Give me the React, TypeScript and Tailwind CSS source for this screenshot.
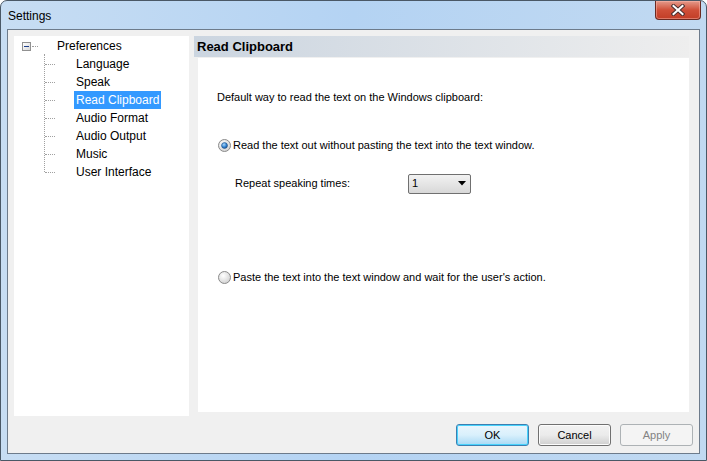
import React from "react";

const FONT = { fontFamily: '"Liberation Sans", Arial, sans-serif' };

function Radio({ checked }: { checked?: boolean }) {
  return (
    <svg width="13" height="13" viewBox="0 0 13 13" className="shrink-0">
      <defs>
        <radialGradient id={checked ? "rg1" : "rg2"} cx="0.4" cy="0.35" r="0.7">
          <stop offset="0" stopColor="#ffffff" />
          <stop offset="1" stopColor="#d0d0d0" />
        </radialGradient>
        <radialGradient id="dot" cx="0.4" cy="0.35" r="0.7">
          <stop offset="0" stopColor="#a9d8fa" />
          <stop offset="0.6" stopColor="#2f7fcf" />
          <stop offset="1" stopColor="#1b4f8a" />
        </radialGradient>
      </defs>
      <circle cx="6.5" cy="6.5" r="6" fill={`url(#${checked ? "rg1" : "rg2"})`} stroke="#8a8a8a" strokeWidth="1" />
      {checked && <circle cx="6.5" cy="6.5" r="3" fill="url(#dot)" stroke="#1d4b7e" strokeWidth="0.5" />}
    </svg>
  );
}

function Btn({ label, variant }: { label: string; variant?: "default" | "disabled" }) {
  const base = "w-[73px] h-[22px] rounded-[3px] flex items-center justify-center text-[11px]";
  if (variant === "default")
    return (
      <div className={`${base} border border-[#3c7fb1] bg-gradient-to-b from-[#eaf6fd] via-[#d9f0fc] to-[#a7d9f5] text-black shadow-[inset_0_0_0_1px_#48d2fc]`}>
        {label}
      </div>
    );
  if (variant === "disabled")
    return <div className={`${base} border border-[#adb2b5] bg-[#f4f4f4] text-[#838383]`}>{label}</div>;
  return (
    <div className={`${base} border border-[#707070] bg-gradient-to-b from-[#f2f2f2] via-[#ebebeb] to-[#cfcfcf] text-black shadow-[inset_0_0_0_1px_#fcfcfc]`}>
      {label}
    </div>
  );
}

const items = ["Language", "Speak", "Read Clipboard", "Audio Format", "Audio Output", "Music", "User Interface"];

export default function App() {
  return (
    <div
      className="w-[707px] h-[461px] flex flex-col border border-[#4a5866] rounded-t-[7px] overflow-hidden bg-gradient-to-r from-[#c7ddf3] via-[#b4d3f3] to-[#c1d9f1] text-black"
      style={FONT}
    >
      {/* title bar */}
      <div className="h-[28px] flex items-start shrink-0 relative">
        <span className="ml-[7px] mt-[6px] text-[12px] text-black">Settings</span>
        <div className="absolute right-[5px] top-0 w-[46px] h-[19px] rounded-b-[4px] border border-t-0 border-[#6b2a22] bg-gradient-to-b from-[#e39a8b] via-[#cf4f38] to-[#c23d26] flex items-center justify-center shadow-[inset_0_0_0_1px_rgba(255,190,180,0.45)]">
          <svg width="14" height="12" viewBox="0 0 14 12">
            <path d="M2.5 2 L11.5 10 M11.5 2 L2.5 10" stroke="#4a3030" strokeWidth="4" strokeLinecap="square" />
            <path d="M2.5 2 L11.5 10 M11.5 2 L2.5 10" stroke="#ffffff" strokeWidth="2" strokeLinecap="square" />
          </svg>
        </div>
      </div>
      {/* client */}
      <div className="mx-[6px] mb-[6px] flex-1 border border-[#6d7b8b] bg-[#f0f0f0] flex flex-col">
        <div className="flex mt-[6px] ml-[6px]">
          {/* tree */}
          <div className="w-[175px] h-[380px] bg-white relative text-[12px]">
            <div className="absolute left-[8px] top-[6px] w-[9px] h-[9px] border border-[#919191] bg-gradient-to-br from-white to-[#d8d8d8] flex items-center justify-center">
              <div className="w-[5px] h-[1px] bg-[#1e3f8a]" />
            </div>
            <div className="absolute left-[18px] top-[10px] w-[6px] border-t border-dotted border-[#a0a0a0]" />
            <div className="absolute left-[30px] top-[18px] h-[118px] border-l border-dotted border-[#a0a0a0]" />
            <div className="absolute left-[42px] top-[2px] h-[17px] leading-[17px] px-[1px]">Preferences</div>
            {items.map((t, i) => (
              <React.Fragment key={t}>
                <div
                  className="absolute left-[31px] w-[10px] border-t border-dotted border-[#a0a0a0]"
                  style={{ top: 28 + i * 18 }}
                />
                <div
                  className={`absolute left-[60px] h-[18px] leading-[18px] px-[2px] ${
                    t === "Read Clipboard" ? "bg-[#3399ff] text-white" : ""
                  }`}
                  style={{ top: 19 + i * 18 }}
                >
                  {t}
                </div>
              </React.Fragment>
            ))}
          </div>
          {/* right */}
          <div className="ml-[5px] w-[495px] flex flex-col">
            <div className="h-[21px] bg-gradient-to-r from-[#cbd5e0] to-[#eeeeee] flex items-center pl-[3px] text-[13px] font-bold">
              Read Clipboard
            </div>
            <div className="ml-[4px] mt-[1px] h-[354px] bg-white text-[11px] flex flex-col">
              <div className="ml-[19px] mt-[31px] h-[16px] leading-[16px]">
                Default way to read the text on the Windows clipboard:
              </div>
              <div className="ml-[20px] mt-[32px] flex items-center gap-[2px] h-[16px]">
                <Radio checked />
                <span>Read the text out without pasting the text into the text window.</span>
              </div>
              <div className="ml-[37px] mt-[21px] flex items-center h-[19px]">
                <span className="w-[173px]">Repeat speaking times:</span>
                <div className="w-[63px] h-[20px] border border-[#707070] rounded-[2px] bg-gradient-to-b from-[#f2f2f2] to-[#d8d8d8] flex items-center justify-between px-[3px]">
                  <span>1</span>
                  <svg width="8" height="5" viewBox="0 0 8 5" className="mr-[1px]">
                    <path d="M0 0 H8 L4 4.5 Z" fill="#000" />
                  </svg>
                </div>
              </div>
              <div className="ml-[20px] mt-[76px] flex items-center gap-[2px] h-[16px]">
                <Radio />
                <span>Paste the text into the text window and wait for the user's action.</span>
              </div>
            </div>
          </div>
        </div>
        <div className="flex justify-end gap-[9px] mt-[8px] mr-[6px]">
          <Btn label="OK" variant="default" />
          <Btn label="Cancel" />
          <Btn label="Apply" variant="disabled" />
        </div>
      </div>
    </div>
  );
}
